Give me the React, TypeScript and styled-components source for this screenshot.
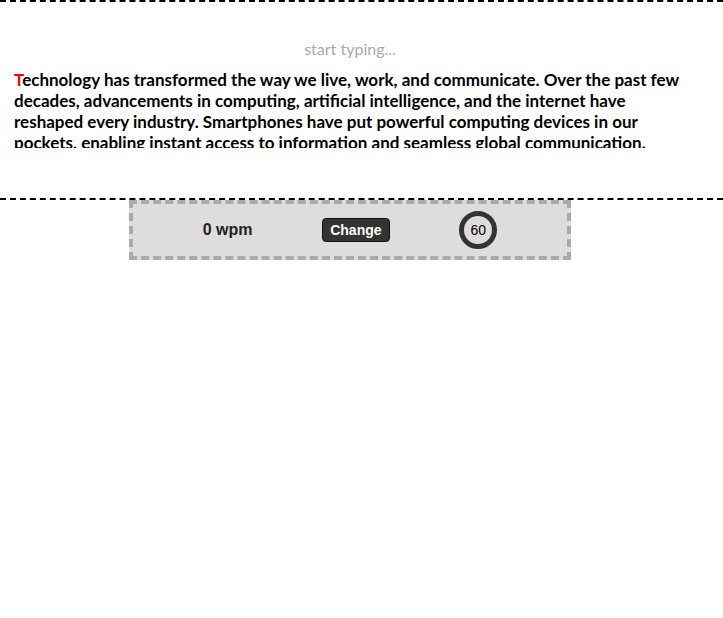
import { createGlobalStyle } from "styled-components";
import styled from "styled-components";

const GlobalStyle = createGlobalStyle`
  body {
    margin: 0;
    background: #fff;
    font-family: "Segoe UI", Lato, "Noto Sans", sans-serif;
  }
`;

const TypingArea = styled.section`
  height: 196px;
  border-top: 2px dashed #000;
  border-bottom: 2px dashed #000;
`;

const Column = styled.div`
  width: 700px;
`;

const Input = styled.input`
  display: block;
  width: 100%;
  box-sizing: border-box;
  margin: 35px 0 0;
  padding: 0;
  height: 22px;
  border: none;
  outline: none;
  background: transparent;
  text-align: center;
  font-family: "Segoe UI", Lato, "Noto Sans", sans-serif;
  font-size: 16px;
  color: #333;

  &::placeholder {
    color: #aaa;
  }
`;

const Passage = styled.p`
  margin: 10px 0 0;
  padding: 0 14px;
  height: 79px;
  overflow: hidden;
  font-size: 17px;
  line-height: 21px;
  font-weight: 700;
  color: #000;
`;

const Current = styled.span`
  color: #f00;
`;

const Stats = styled.div`
  width: 442px;
  height: 60px;
  box-sizing: border-box;
  margin: 0 auto;
  border: 4px dashed #aaa;
  background: #ddd;
  display: flex;
  align-items: center;
  justify-content: space-evenly;
  font-family: "Liberation Sans", Arial, sans-serif;
`;

const Wpm = styled.span`
  font-size: 16px;
  font-weight: 700;
  color: #222;
`;

const ChangeButton = styled.button`
  height: 24px;
  padding: 0 7px;
  border: 1px solid #111;
  border-radius: 4px;
  background: #333;
  color: #fff;
  font-family: "Liberation Sans", Arial, sans-serif;
  font-size: 14px;
  font-weight: 700;
  cursor: pointer;
`;

const Timer = styled.div`
  width: 38px;
  height: 38px;
  box-sizing: border-box;
  border: 5px solid #333;
  border-radius: 50%;
  display: flex;
  align-items: center;
  justify-content: center;
  font-size: 14px;
  color: #000;
`;

const passage =
  "echnology has transformed the way we live, work, and communicate. Over the past few decades, advancements in computing, artificial intelligence, and the internet have reshaped every industry. Smartphones have put powerful computing devices in our pockets, enabling instant access to information and seamless global communication.";

export default function App() {
  return (
    <>
      <GlobalStyle />
      <TypingArea>
        <Column>
          <Input placeholder="start typing..." />
          <Passage>
            <Current>T</Current>
            {passage}
          </Passage>
        </Column>
      </TypingArea>
      <Column>
        <Stats>
          <Wpm>0 wpm</Wpm>
          <ChangeButton>Change</ChangeButton>
          <Timer>60</Timer>
        </Stats>
      </Column>
    </>
  );
}
